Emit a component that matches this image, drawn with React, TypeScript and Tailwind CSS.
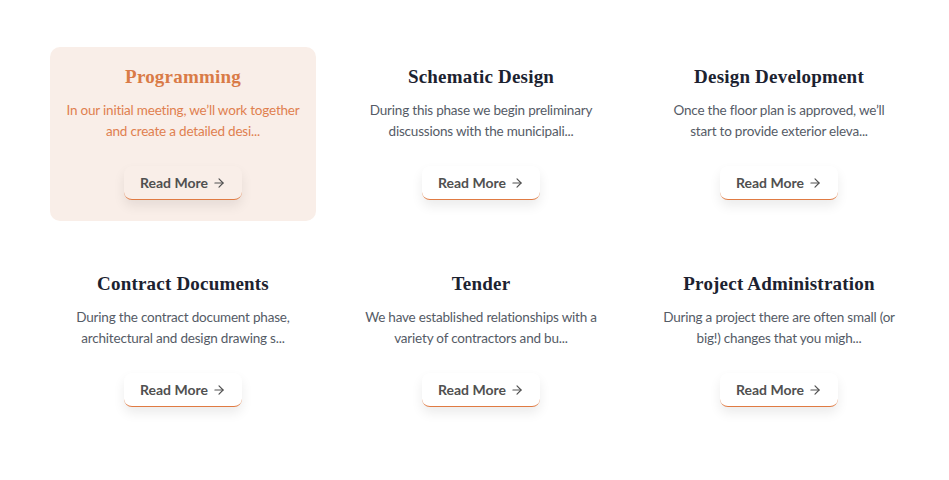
import { ArrowRight } from 'lucide-react';

const PHASES = [
  {
    title: 'Programming',
    lines: ['In our initial meeting, we\u2019ll work together', 'and create a detailed desi...'],
    active: true,
  },
  {
    title: 'Schematic Design',
    lines: ['During this phase we begin preliminary', 'discussions with the municipali...'],
  },
  {
    title: 'Design Development',
    lines: ['Once the floor plan is approved, we\u2019ll', 'start to provide exterior eleva...'],
  },
  {
    title: 'Contract Documents',
    lines: ['During the contract document phase,', 'architectural and design drawing s...'],
  },
  {
    title: 'Tender',
    lines: ['We have established relationships with a', 'variety of contractors and bu...'],
  },
  {
    title: 'Project Administration',
    lines: ['During a project there are often small (or', 'big!) changes that you migh...'],
  },
];

function PhaseCard({ title, lines, active }: { title: string; lines: string[]; active?: boolean }) {
  return (
    <div
      className={
        active
          ? 'flex h-[174px] flex-col items-center rounded-[10px] bg-[#f9eee8] pt-[18px] text-center'
          : 'flex h-[174px] flex-col items-center rounded-[10px] pt-[18px] text-center'
      }
    >
      <h3
        className={
          active
            ? "font-['Liberation_Serif',serif] text-[19px] font-bold leading-[24px] tracking-[0.2px] text-[#d97b47]"
            : "font-['Liberation_Serif',serif] text-[19px] font-bold leading-[24px] tracking-[0.2px] text-[#1c2230]"
        }
      >
        {title}
      </h3>
      <p
        className={
          active
            ? "mt-[11px] whitespace-nowrap font-['Lato',sans-serif] text-[13.5px] leading-[21px] tracking-[-0.2px] text-[#e0804f]"
            : "mt-[11px] whitespace-nowrap font-['Lato',sans-serif] text-[13.5px] leading-[21px] tracking-[-0.2px] text-[#555b66]"
        }
      >
        {lines[0]}
        <br />
        {lines[1]}
      </p>
      <button
        className={
          active
            ? "mt-[24px] flex h-[34px] w-[118px] items-center justify-center gap-1 rounded-[8px] border-b border-[#e07b43] bg-[#f9eee8] font-['Lato',sans-serif] text-[14px] font-bold text-[#505050] shadow-[0_6px_12px_rgba(0,0,0,0.08)]"
            : "mt-[24px] flex h-[34px] w-[118px] items-center justify-center gap-1 rounded-[8px] border-b border-[#e07b43] bg-white font-['Lato',sans-serif] text-[14px] font-bold text-[#505050] shadow-[0_6px_12px_rgba(0,0,0,0.08)]"
        }
      >
        Read More
        <ArrowRight size={14} strokeWidth={2} />
      </button>
    </div>
  );
}

export default function App() {
  return (
    <div className="min-h-[480px] bg-white pl-[50px] pr-[37px] pt-[47px]">
      <div className="grid grid-cols-3 gap-x-8 gap-y-[33px]">
        {PHASES.map((p) => (
          <PhaseCard key={p.title} {...p} />
        ))}
      </div>
    </div>
  );
}
